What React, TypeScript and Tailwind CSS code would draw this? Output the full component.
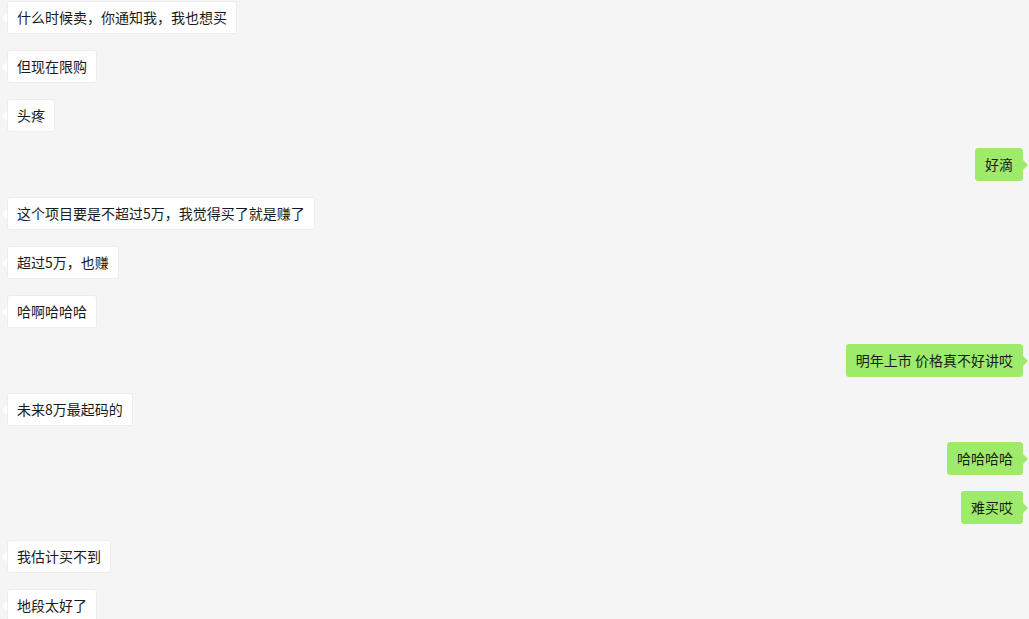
import React from 'react';

type Msg = { text: string; mine?: boolean };

const messages: Msg[] = [
  { text: '什么时候卖，你通知我，我也想买' },
  { text: '但现在限购' },
  { text: '头疼' },
  { text: '好滴', mine: true },
  { text: '这个项目要是不超过5万，我觉得买了就是赚了' },
  { text: '超过5万，也赚' },
  { text: '哈啊哈哈哈' },
  { text: '明年上市 价格真不好讲哎', mine: true },
  { text: '未来8万最起码的' },
  { text: '哈哈哈哈', mine: true },
  { text: '难买哎', mine: true },
  { text: '我估计买不到' },
  { text: '地段太好了' },
];

const Bubble: React.FC<{ msg: Msg }> = ({ msg }) => {
  if (msg.mine) {
    return (
      <div className="flex justify-end pr-[6px]">
        <div className="relative rounded-[3px] border border-[#9eea6a] bg-[#9eea6a] px-[9px] py-[5px] leading-[21px] text-[#1a1a1a]">
          {msg.text}
          <span className="absolute right-[-6px] top-1/2 -translate-y-1/2 border-y-[5px] border-l-[5px] border-y-transparent border-l-[#9eea6a]" />
        </div>
      </div>
    );
  }
  return (
    <div className="flex justify-start pl-[7px]">
      <div className="relative rounded-[3px] border border-[#ededed] bg-white px-[9px] py-[5px] leading-[21px] text-[#1a1a1a]">
        {msg.text}
        <span className="absolute left-[-6px] top-1/2 -translate-y-1/2 border-y-[5px] border-r-[5px] border-y-transparent border-r-white" />
      </div>
    </div>
  );
};

export default function App() {
  return (
    <div
      className="h-[619px] w-[1029px] overflow-hidden bg-[#f5f5f5] pt-[1px] text-[14px]"
      style={{ fontFamily: '"Microsoft YaHei", "Noto Sans CJK SC", "Liberation Sans", sans-serif' }}
    >
      <div className="flex flex-col gap-4">
        {messages.map((m, i) => (
          <Bubble key={i} msg={m} />
        ))}
      </div>
    </div>
  );
}
